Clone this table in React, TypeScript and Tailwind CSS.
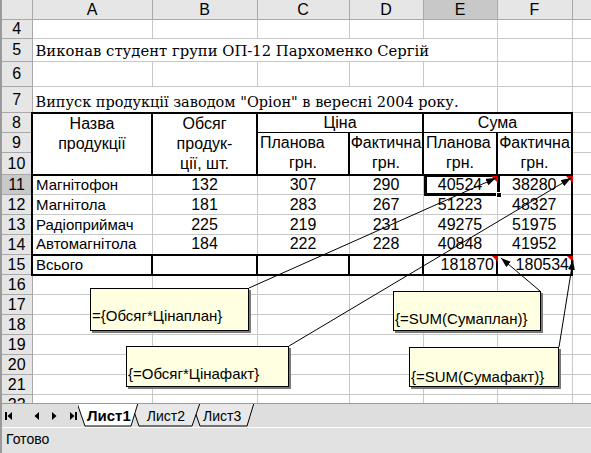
import React from 'react';

const rows = [
  { n: 11, name: 'Магнітофон', qty: '132', cp: '307', cf: '290', sp: '40524', sf: '38280' },
  { n: 12, name: 'Магнітола', qty: '181', cp: '283', cf: '267', sp: '51223', sf: '48327' },
  { n: 13, name: 'Радіоприймач', qty: '225', cp: '219', cf: '231', sp: '49275', sf: '51975' },
  { n: 14, name: 'Автомагнітола', qty: '184', cp: '222', cf: '228', sp: '40848', sf: '41952' },
];

// row number cell; h is the content height (row pitch minus the grid line)
function RowHead({ n, h, active }: { n: number; h: string; active?: boolean }) {
  return (
    <td className={`border-b border-r border-[#a9a9a9] p-0 text-center ${active ? 'bg-[#c8c8c8]' : 'bg-[#e6e6e6]'}`}>
      <div className={`${h} flex items-center justify-center leading-none`}>{n}</div>
    </td>
  );
}

// plain empty cell with grey grid lines
function Cell() {
  return <td className="border border-[#c8c8c8] p-0" />;
}

export default function App() {
  return (
    <div className="h-[453px] w-[591px] overflow-hidden border-l-2 border-[#9a9a9a] bg-white font-['Liberation_Sans',Arial,sans-serif] text-[16px] text-black">
      {/* Sheet */}
      <div className="relative h-[403px] overflow-hidden">
        <table className="w-[600px] table-fixed border-collapse">
          <colgroup>
            <col className="w-[30px]" />
            <col className="w-[120px]" />
            <col className="w-[105px]" />
            <col className="w-[92px]" />
            <col className="w-[74px]" />
            <col className="w-[74px]" />
            <col className="w-[75px]" />
            <col className="w-[30px]" />
          </colgroup>
          <tbody>
            <tr className="bg-[#e6e6e6]">
              <td className="border-b border-r border-[#a9a9a9] p-0">
                <div className="h-[19px]" />
              </td>
              {['A', 'B', 'C', 'D', 'E', 'F', ''].map((c) => (
                <td
                  key={c}
                  className={`border-b border-r border-[#a9a9a9] p-0 text-center leading-[19px] ${c === 'E' ? 'bg-[#c8c8c8]' : ''}`}
                >
                  {c}
                </td>
              ))}
            </tr>
            <tr>
              <RowHead n={4} h="h-[18px]" />
              <Cell /><Cell /><Cell /><Cell /><Cell /><Cell /><Cell />
            </tr>
            <tr>
              <RowHead n={5} h="h-[22px]" />
              <td colSpan={5} className="whitespace-nowrap border border-[#c8c8c8] px-[3px] align-bottom font-['DejaVu_Serif',serif] text-[14.8px] leading-[20px]">
                Виконав студент групи ОП-12 Пархоменко Сергій
              </td>
              <Cell /><Cell />
            </tr>
            <tr>
              <RowHead n={6} h="h-[24px]" />
              <Cell /><Cell /><Cell /><Cell /><Cell /><Cell /><Cell />
            </tr>
            <tr>
              <RowHead n={7} h="h-[25px]" />
              <td colSpan={5} className="whitespace-nowrap border border-[#c8c8c8] px-[3px] align-bottom font-['DejaVu_Serif',serif] text-[14.5px] leading-[20px]">
                Випуск продукції заводом "Оріон" в вересні 2004 року.
              </td>
              <Cell /><Cell />
            </tr>

            {/* table header */}
            <tr>
              <RowHead n={8} h="h-[19px]" />
              <td rowSpan={3} className="border-2 border-black p-0 align-top">
                <div className="h-[20px] text-center leading-[20px]">Назва</div>
                <div className="h-[20px] text-center leading-[20px]">продукції</div>
              </td>
              <td rowSpan={3} className="border-2 border-black p-0 align-top">
                <div className="h-[20px] text-center leading-[20px]">Обсяг</div>
                <div className="h-[20px] text-center leading-[20px]">продук-</div>
                <div className="h-[19px] text-center leading-[19px]">ції, шт.</div>
              </td>
              <td colSpan={2} className="border-2 border-b border-black p-0 text-center leading-[18px]">
                Ціна
              </td>
              <td colSpan={2} className="border-2 border-b border-black p-0 text-center leading-[18px]">
                Сума
              </td>
              <Cell />
            </tr>
            <tr>
              <RowHead n={9} h="h-[19px]" />
              <td rowSpan={2} className="border-2 border-t-0 border-black p-0 align-top">
                <div className="h-[20px] pl-[2px] leading-[20px]">Планова</div>
                <div className="h-[19px] text-center leading-[19px]">грн.</div>
              </td>
              <td rowSpan={2} className="border-2 border-t-0 border-black p-0 align-top">
                <div className="h-[20px] text-center leading-[20px]">Фактична</div>
                <div className="h-[19px] text-center leading-[19px]">грн.</div>
              </td>
              <td rowSpan={2} className="border-2 border-t-0 border-black p-0 align-top">
                <div className="h-[20px] pl-[2px] leading-[20px]">Планова</div>
                <div className="h-[19px] text-center leading-[19px]">грн.</div>
              </td>
              <td rowSpan={2} className="border-2 border-t-0 border-black p-0 align-top">
                <div className="h-[20px] text-center leading-[20px]">Фактична</div>
                <div className="h-[19px] text-center leading-[19px]">грн.</div>
              </td>
              <Cell />
            </tr>
            <tr>
              <RowHead n={10} h="h-[21px]" />
              <Cell />
            </tr>

            {/* data */}
            {rows.map((r) => (
              <tr key={r.n} className="leading-[18px]">
                <RowHead n={r.n} h="h-[19px]" active={r.n === 11} />
                <td className="whitespace-nowrap border border-l-2 border-[#c8c8c8] border-l-black p-0 pl-[3px] text-[15px]">{r.name}</td>
                <td className="border border-[#c8c8c8] p-0 text-center">{r.qty}</td>
                <td className="border border-[#c8c8c8] p-0 text-center">{r.cp}</td>
                <td className="border border-[#c8c8c8] p-0 text-center">{r.cf}</td>
                <td className="border border-[#c8c8c8] p-0 text-center">{r.sp}</td>
                <td className="border border-r-2 border-[#c8c8c8] border-r-black p-0 text-center">{r.sf}</td>
                <Cell />
              </tr>
            ))}
            <tr className="leading-[18px]">
              <RowHead n={15} h="h-[19px]" />
              <td className="border-2 border-black p-0 pl-[3px] text-[15px]">Всього</td>
              <td className="border-2 border-black p-0" />
              <td className="border-2 border-black p-0" />
              <td className="border-2 border-black p-0" />
              <td className="border-2 border-black p-0 pr-[2px] text-right">181870</td>
              <td className="border-2 border-black p-0 pr-[2px] text-right">180534</td>
              <Cell />
            </tr>
            {[16, 17, 18, 19, 20, 21, 22].map((n) => (
              <tr key={n}>
                <RowHead n={n} h="h-[19px]" />
                <Cell /><Cell /><Cell /><Cell /><Cell /><Cell /><Cell />
              </tr>
            ))}
          </tbody>
        </table>

        {/* active cell E11 */}
        <div className="pointer-events-none absolute left-[422px] top-[174px] h-[22px] w-[76px] border-[3px] border-black">
          <div className="absolute -bottom-[5px] -right-[5px] h-[6px] w-[6px] border border-white bg-black" />
        </div>

        {/* comment arrows */}
        <svg className="pointer-events-none absolute left-0 top-0" width="591" height="403">
          <defs>
            <marker id="ah" markerWidth="10" markerHeight="7" refX="10" refY="3.5" orient="auto" markerUnits="userSpaceOnUse">
              <path d="M0,0 L10,3.5 L0,7 z" fill="#000" />
            </marker>
          </defs>
          <polygon points="489,176 496,176 496,183" fill="#e00000" />
          <polygon points="564,176 571,176 571,183" fill="#e00000" />
          <polygon points="490,256 496,256 496,262" fill="#e00000" />
          <polygon points="565,256 571,256 571,262" fill="#e00000" />
          <line x1="247" y1="288" x2="494" y2="178" stroke="#000" strokeWidth="1" markerEnd="url(#ah)" />
          <line x1="287" y1="346" x2="569" y2="178" stroke="#000" strokeWidth="1" markerEnd="url(#ah)" />
          <line x1="538" y1="291" x2="499" y2="258" stroke="#000" strokeWidth="1" markerEnd="url(#ah)" />
          <line x1="557" y1="347" x2="571" y2="260" stroke="#000" strokeWidth="1" markerEnd="url(#ah)" />
        </svg>

        {/* comments */}
        <div className="absolute left-[88px] top-[288px] h-[43px] w-[159px] border border-black bg-[#ffffe1] pl-[1px] pt-[18px] text-[15px] leading-[17px] shadow-[2px_2px_0_#7a7a7a]">
          ={'{'}Обсяг*Цінаплан{'}'}
        </div>
        <div className="absolute left-[124px] top-[346px] h-[41px] w-[163px] border border-black bg-[#ffffe1] pl-[1px] pt-[18px] text-[15px] leading-[17px] shadow-[2px_2px_0_#7a7a7a]">
          {'{'}=Обсяг*Цінафакт{'}'}
        </div>
        <div className="absolute left-[391px] top-[291px] h-[40px] w-[148px] border border-black bg-[#ffffe1] pl-[1px] pt-[18px] text-[15px] leading-[17px] shadow-[2px_2px_0_#7a7a7a]">
          {'{'}=SUM(Сумаплан){'}'}
        </div>
        <div className="absolute left-[407px] top-[347px] h-[40px] w-[150px] border border-black bg-[#ffffe1] pl-[1px] pt-[20px] text-[15px] leading-[17px] shadow-[2px_2px_0_#7a7a7a]">
          {'{'}=SUM(Сумафакт){'}'}
        </div>
      </div>

      {/* Sheet tabs */}
      <div className="flex h-[24px] items-stretch border-t border-[#9a9a9a] bg-[#dedede]">
        <div className="flex w-[76px] items-center gap-[13px] pl-[3px]">
          <svg width="7" height="8" viewBox="0 0 7 8"><rect x="0" y="0" width="2" height="8" fill="#000" /><path d="M7,0 L2.5,4 L7,8 z" fill="#000" /></svg>
          <svg width="5" height="8" viewBox="0 0 5 8" className="ml-[9px]"><path d="M5,0 L0.5,4 L5,8 z" fill="#000" /></svg>
          <svg width="5" height="8" viewBox="0 0 5 8"><path d="M0,0 L4.5,4 L0,8 z" fill="#000" /></svg>
          <svg width="7" height="8" viewBox="0 0 7 8"><path d="M0,0 L4.5,4 L0,8 z" fill="#000" /><rect x="5" y="0" width="2" height="8" fill="#000" /></svg>
        </div>
        <div className="relative flex w-[190px] items-center">
          <svg className="absolute left-0 top-0" width="190" height="24" viewBox="0 0 190 24">
            <polygon points="114,-1 176,-1 169,22 122,22" fill="#e8e8e8" stroke="#000" strokeWidth="1" />
            <polygon points="53,-1 122,-1 114,22 61,22" fill="#e8e8e8" stroke="#000" strokeWidth="1" />
            <polygon points="-1,-1 60,-1 53,22 7,22" fill="#fff" stroke="#000" strokeWidth="1" />
          </svg>
          <span className="relative ml-[9px] text-[15px] font-bold leading-none">Лист1</span>
          <span className="relative ml-[16px] text-[14px] leading-none">Лист2</span>
          <span className="relative ml-[18px] text-[14px] leading-none">Лист3</span>
        </div>
      </div>

      {/* Status bar */}
      <div className="flex h-[26px] items-center border-t border-white bg-[#e2e2e2] pl-[4px] text-[14px]">
        <span className="mb-[2px]">Готово</span>
      </div>
    </div>
  );
}
